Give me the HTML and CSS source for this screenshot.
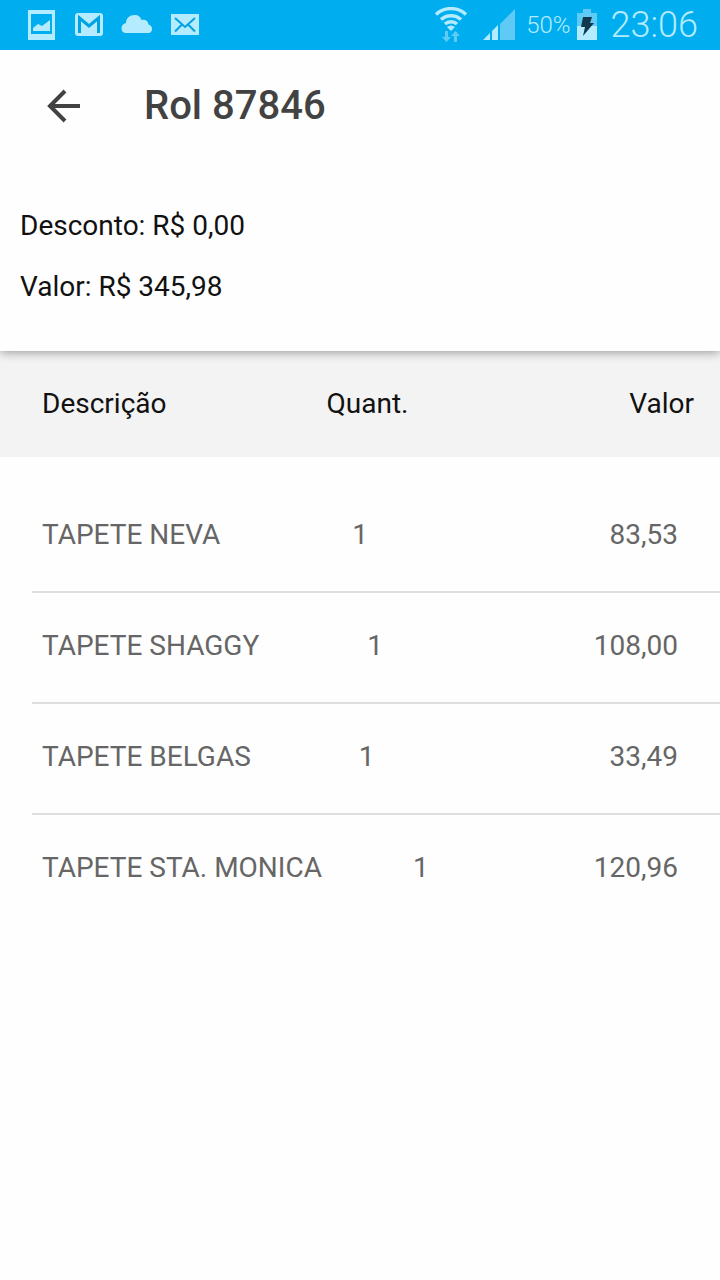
FILE: index.html
```html
<!DOCTYPE html>
<html lang="pt-BR">

<head>
    <meta charset="UTF-8">
    <meta name="viewport" content="width=device-width, initial-scale=1.0">
    <title>Rol 87846</title>
    <link rel="stylesheet" href="styles.css">
</head>

<body>
    <div class="status-bar">
        <div class="notifications">
            <svg width="27" height="31" viewBox="0 0 27 31" fill="#b5ebff">
                <path fill-rule="evenodd" d="M0 0h27v30H0zM3 4v20h21V4z" />
                <path d="M5 21v-3l5-4 4 2 8-6v11z" />
            </svg>
            <svg width="28" height="24" viewBox="0 0 28 24">
                <rect width="28" height="23" rx="3" fill="#b5ebff" />
                <path d="M4.5 20V5L14 13l9.500-8v15" fill="none" stroke="#00a3e0" stroke-width="3" />
            </svg>
            <svg width="32" height="20" viewBox="0 0 32 20" fill="#b5ebff">
                <path d="M5 18C-1 18-1 9 5 8c0-5 4-8 8.500-8 4 0 6 2 7 5 4-1 6.500 1 7 4.500 5 1 4.500 8.500 0 8.500z" />
            </svg>
            <svg width="29" height="22" viewBox="0 0 29 22">
                <rect width="28" height="21" fill="#b5ebff" />
                <path d="M4 4l10 9L24 4M4 17.500l7-7M24 17.500l-7-7" fill="none" stroke="#00a3e0" stroke-width="2" />
            </svg>
        </div>
        <div class="system">
            <svg width="34" height="36" viewBox="0 0 34 36">
                <g fill="none" stroke="#b5ebff" stroke-width="3.500">
                    <path d="M2 7.500a22 22 0 0 1 30 0" />
                    <path d="M7 12.500a15 15 0 0 1 20 0" />
                    <path d="M11 17a9 9 0 0 1 12 0" />
                </g>
                <path d="M13 20q4-3 8 0l-4 4z" fill="#b5ebff" />
                <path d="M11 24h3v6h3l-4.500 5L8 30h3zM20 35h3v-6h3l-4.500-5-4.500 5h3z" fill="#5fcaf5" />
            </svg>
            <svg class="signal" width="34" height="32" viewBox="0 0 34 32">
                <path d="M17 15L32 0v31H17z" fill="#5fcaf5" />
                <path d="M0 31l7-7v7zM9 22l6-6v15H9z" fill="#b5ebff" />
            </svg>
            <span class="battery-level">50%</span>
            <svg width="20" height="32" viewBox="0 0 20 32">
                <path d="M0 4h6V0h8v4h6v14H0z" fill="#5fcaf5" />
                <path d="M0 17h20v14H0z" fill="#b5ebff" />
                <path d="M6 8h9l-2 6h4L6 27l2-9H4z" fill="#12384d" />
            </svg>
            <span class="clock">23:06</span>
        </div>
    </div>

    <header class="top">
        <div class="toolbar">
            <button class="back-button" type="button" aria-label="Voltar">
                <svg width="34" height="34" viewBox="0 0 34 34" fill="none" stroke="#424242" stroke-width="4">
                    <path d="M33 17H4M18 2L3 17l15 15" />
                </svg>
            </button>
            <h1>Rol 87846</h1>
        </div>
        <div class="summary">
            <p>Desconto: R$ 0,00</p>
            <p>Valor: R$ 345,98</p>
        </div>
    </header>

    <table class="items">
        <thead>
            <tr>
                <th>Descrição</th>
                <th>Quant.</th>
                <th>Valor</th>
            </tr>
        </thead>
        <tbody>
            <tr>
                <td class="short">TAPETE NEVA</td>
                <td>1</td>
                <td>83,53</td>
            </tr>
            <tr>
                <td class="medium">TAPETE SHAGGY</td>
                <td>1</td>
                <td>108,00</td>
            </tr>
            <tr>
                <td class="medium">TAPETE BELGAS</td>
                <td>1</td>
                <td>33,49</td>
            </tr>
            <tr>
                <td class="long">TAPETE STA. MONICA</td>
                <td>1</td>
                <td>120,96</td>
            </tr>
        </tbody>
    </table>
</body>

</html>
```

FILE: styles.css
```css
body {
    margin: 0;
    background-color: #fefefe;
    font-family: Roboto, "Liberation Sans", sans-serif;
    font-size: 28px;
    line-height: 32px;
    color: #111;
}

.status-bar {
    position: relative;
    z-index: 1;
    display: flex;
    justify-content: space-between;
    align-items: center;
    height: 50px;
    padding: 0 22px 0 28px;
    background-color: #00aef0;
    color: #b5ebff;
}

.notifications {
    display: flex;
    align-items: center;
    gap: 18px;
}

.notifications svg:first-child {
    margin-right: 2px;
}

.system {
    display: flex;
    align-items: center;
}

.signal {
    margin: 0 9px 0 15px;
}

.battery-level {
    margin-right: 6px;
    font-size: 24px;
    line-height: 34px;
}

.clock {
    margin-left: 14px;
    font-size: 36px;
    font-weight: 300;
    line-height: 40px;
}

.battery-level {
    font-weight: 300;
}

.top {
    position: relative;
    padding-bottom: 48px;
    background-color: #fefefe;
    box-shadow: 0 1px 10px rgba(0, 0, 0, 0.4);
}

.toolbar {
    display: flex;
    align-items: center;
    gap: 63px;
    height: 112px;
    padding: 0 47px;
}

.back-button {
    display: flex;
    padding: 0;
    border: none;
    background: none;
    cursor: pointer;
}

h1 {
    margin: 0;
    font-size: 40px;
    font-weight: 500;
    line-height: 48px;
    color: #424242;
}

.summary {
    display: flex;
    flex-direction: column;
    gap: 29px;
    padding: 48px 20px 0;
}

.summary p {
    margin: 0;
}

.items,
.items thead,
.items tbody {
    display: block;
}

.items tr {
    display: flex;
    align-items: center;
    box-sizing: border-box;
}

.items th,
.items td {
    padding: 0;
    font-weight: 400;
    text-align: left;
}

.items th:last-child,
.items td:last-child {
    margin-left: auto;
    text-align: right;
}

.items thead tr {
    height: 106px;
    padding: 0 26px 0 42px;
    background-color: #f3f3f3;
}

.items th:first-child {
    margin-right: 160px;
}

.items tbody {
    padding: 25px 0 0 32px;
    color: #666;
}

.items tbody tr {
    height: 111px;
    padding: 0 42px 4px 10px;
    border-bottom: 2px solid #dedede;
}

.items tbody tr:last-child {
    border-bottom-color: transparent;
}

/* longer names leave less room before the quantity */
.short {
    margin-right: 132px;
}

.medium {
    margin-right: 108px;
}

.long {
    margin-right: 91px;
}
```
